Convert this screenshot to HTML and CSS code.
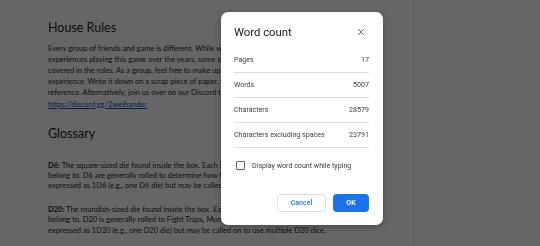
FILE: index.html
```html
<!DOCTYPE html>
<html>
<head>
<meta charset="utf-8">
<link rel="stylesheet" href="styles.css">
</head>
<body>
<div class="workspace">
  <div class="page">
    <h2 class="heading">House Rules</h2>
    <p class="para">Every group of friends and game is different. While we've developed these rules from our<br>experiences playing this game over the years, some of the situations may not have been<br>covered in the rules. As a group, feel free to make up your own rules to enhance your<br>experience. Write it down on a scrap piece of paper, and keep it in the box for future<br>reference. Alternatively, join us over on our Discord to share your house rules with others:<br><a class="link" href="#">https://discord.gg/2weihander</a></p>
    <h2 class="heading gloss">Glossary</h2>
    <p class="para entry first"><b>D6:</b> The square-sized die found inside the box. Each is marked with the pips they<br>belong to. D6 are generally rolled to determine how far players move. They are often<br>expressed as 1D6 (e.g., one D6 die) but may be called on to use multiple D6 dice.</p>
    <p class="para entry"><b>D20:</b> The roundish-sized die found inside the box. Each is marked with the faces they<br>belong to. D20 is generally rolled to Fight Traps, Monsters and other hazards. They are<br>expressed as 1D20 (e.g., one D20 die) but may be called on to use multiple D20 dice.</p>
  </div>
  <div class="gutter"></div>
</div>
<div class="scrim"></div>
<div class="dialog">
  <div class="dialog-head">
    <span class="dialog-title">Word count</span>
    <svg class="close" width="8" height="8" viewBox="0 0 8 8"><path d="M1 1L7 7M7 1L1 7" stroke="#5f6368" stroke-width="0.9" fill="none"/></svg>
  </div>
  <div class="row"><span>Pages</span><span>17</span></div>
  <div class="row"><span>Words</span><span>5007</span></div>
  <div class="row"><span>Characters</span><span>28579</span></div>
  <div class="row"><span>Characters excluding spaces</span><span>23791</span></div>
  <div class="check-row"><span class="box"></span><span>Display word count while typing</span></div>
  <div class="actions">
    <button class="btn cancel">Cancel</button>
    <button class="btn ok">OK</button>
  </div>
</div>
</body>
</html>
```
FILE: styles.css
```css
html, body {
  margin: 0;
  padding: 0;
  width: 540px;
  height: 246px;
  overflow: hidden;
  background: #f8f9fa;
}
.workspace {
  display: flex;
  height: 246px;
}
.page {
  width: 365px;
  height: 246px;
  background: #ffffff;
  border-right: 1px solid #dadce0;
  padding: 0 0 0 48px;
  overflow: hidden;
  font-family: "Lato", "Open Sans", sans-serif;
  color: #1f1f1f;
  white-space: nowrap;
}
.gutter {
  flex: 1;
}
.heading {
  margin: 20px 0 0;
  font-weight: 400;
  font-size: 12.5px;
  line-height: 16px;
  color: #1f1f1f;
}
.heading.gloss {
  margin-top: 16px;
}
.para {
  margin: 6.5px 0 0;
  font-size: 7.5px;
  line-height: 11.2px;
}
.entry {
  line-height: 10.4px;
  margin-top: 13px;
}
.entry.first {
  margin-top: 18.8px;
}
.link {
  color: #1155cc;
  text-decoration: underline;
}
.scrim {
  position: fixed;
  inset: 0;
  background: rgba(0, 0, 0, 0.6);
}
.dialog {
  position: absolute;
  left: 221px;
  top: 12px;
  width: 162px;
  height: 213px;
  box-sizing: border-box;
  padding: 13px 14px 13px 13px;
  background: #fff;
  border-radius: 7px;
  box-shadow: 0 2px 6px rgba(0, 0, 0, 0.3);
  display: flex;
  flex-direction: column;
  font-family: "Roboto", sans-serif;
  color: #3c4043;
}
.dialog-head {
  display: flex;
  justify-content: space-between;
  align-items: center;
  height: 14px;
  margin-bottom: 8.5px;
}
.dialog-title {
  font-size: 11.3px;
  color: #202124;
}
.close {
  margin-right: 4px;
}
.row {
  display: flex;
  justify-content: space-between;
  align-items: center;
  height: 24px;
  border-bottom: 1px solid #dadce0;
  font-size: 7.1px;
  color: #3c4043;
}
.check-row {
  display: flex;
  align-items: center;
  height: 35px;
  padding-left: 2px;
  font-size: 7.1px;
  color: #3c4043;
}
.box {
  width: 7px;
  height: 7px;
  border: 1px solid #5f6368;
  border-radius: 1px;
  margin-right: 7px;
}
.actions {
  display: flex;
  justify-content: flex-end;
  gap: 7px;
  margin-top: 11px;
}
.btn {
  height: 18px;
  padding: 0;
  border-radius: 4px;
  font-family: "Roboto", sans-serif;
  font-size: 7px;
  font-weight: 500;
}
.cancel {
  width: 49px;
  background: #fff;
  border: 1px solid #dadce0;
  color: #1a73e8;
}
.ok {
  width: 36px;
  background: #1a73e8;
  border: none;
  color: #fff;
  font-weight: 700;
}
```
